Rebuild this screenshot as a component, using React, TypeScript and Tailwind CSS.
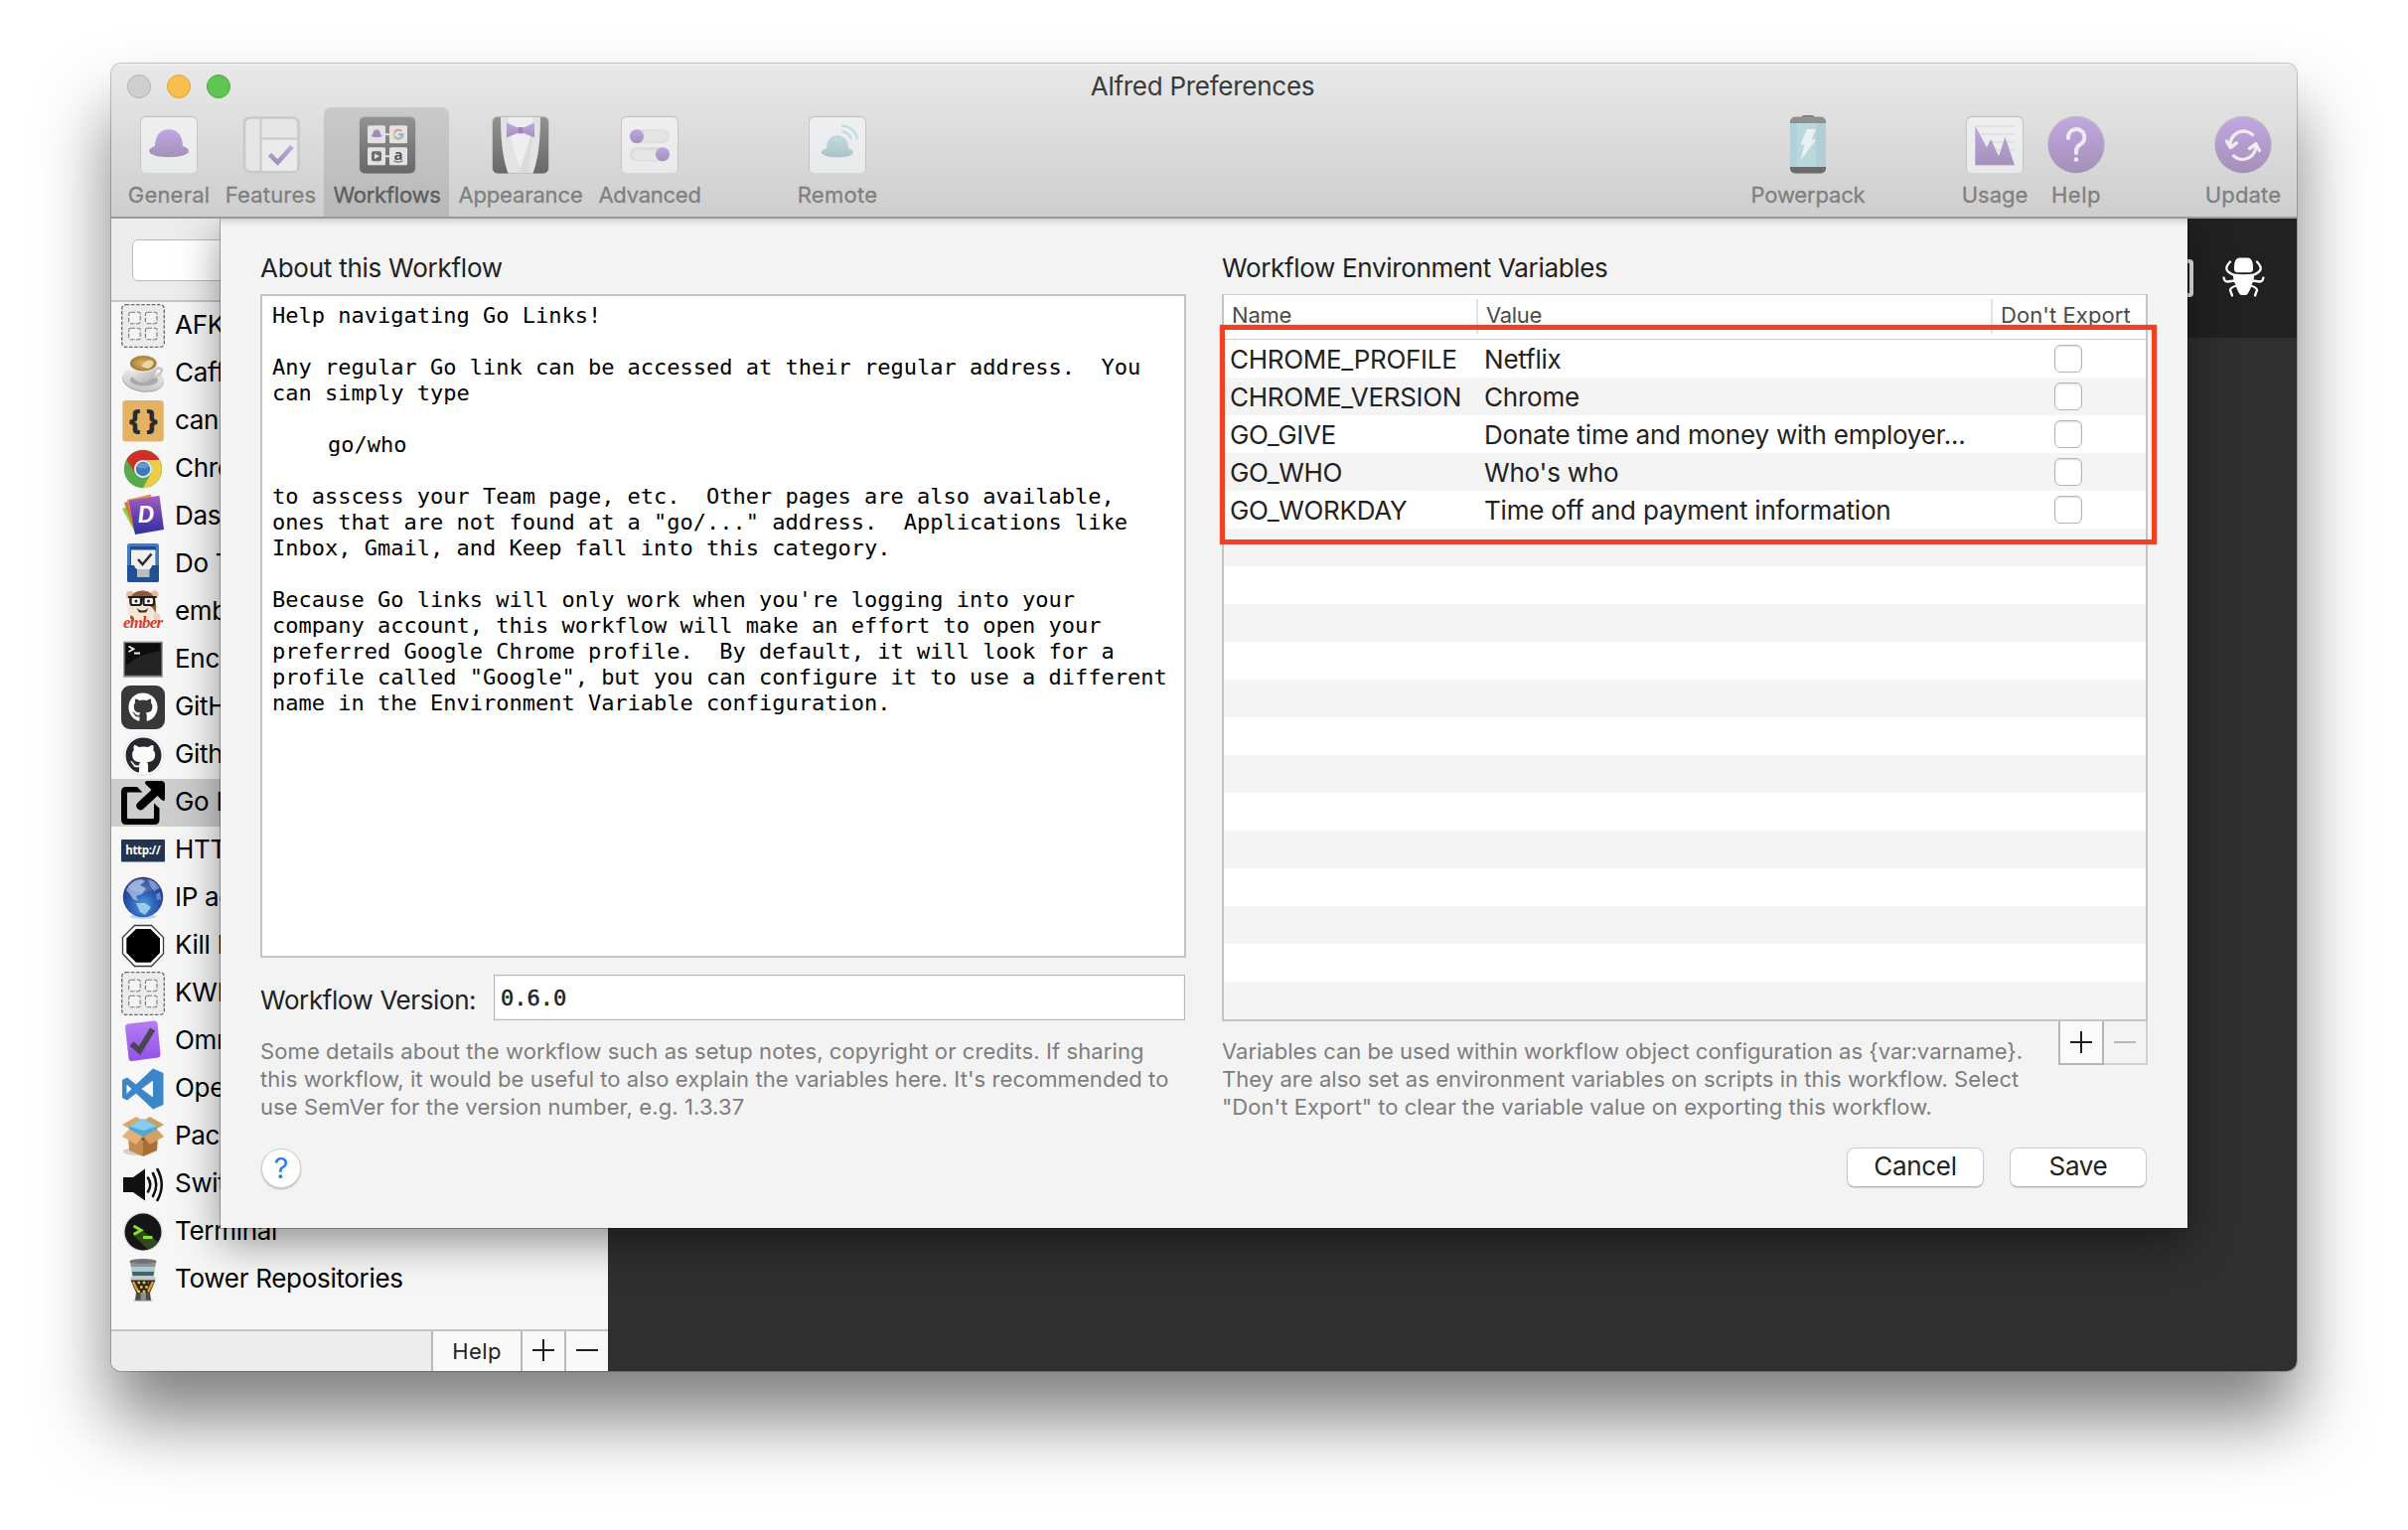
import React from 'react';
import { FaGithub } from 'react-icons/fa';

/* ---------- toolbar icons ---------- */

const Defs = () => (
  <svg width="0" height="0" className="absolute">
    <defs>
      <linearGradient id="purple" x1="0" y1="0" x2="0" y2="1">
        <stop offset="0" stopColor="#c1a6e3" />
        <stop offset="1" stopColor="#a391b7" />
      </linearGradient>
      <linearGradient id="teal" x1="0" y1="0" x2="0" y2="1">
        <stop offset="0" stopColor="#bfdbe2" />
        <stop offset="1" stopColor="#acc3c8" />
      </linearGradient>
      <linearGradient id="tile" x1="0" y1="0" x2="0" y2="1">
        <stop offset="0" stopColor="#eeeff1" />
        <stop offset="1" stopColor="#e8eaea" />
      </linearGradient>
      <linearGradient id="dark" x1="0" y1="0" x2="0" y2="1">
        <stop offset="0" stopColor="#929292" />
        <stop offset="1" stopColor="#686868" />
      </linearGradient>
    </defs>
  </svg>
);

const Box = ({ children }: { children: React.ReactNode }) => (
  <svg width="58" height="60" viewBox="-1 -2 58 60" className="block overflow-visible">
    {children}
  </svg>
);

const Tile = ({ fill = 'url(#tile)' }: { fill?: string }) => (
  <>
    <rect x="-0.8" y="-1.2" width="57.6" height="58" rx="6" fill="#b4b4b4" opacity="0.75" />
    <rect x="0" y="0" width="56" height="56.4" rx="5" fill={fill} />
  </>
);

const Hat = ({ fill }: { fill: string }) => (
  <path
    fill={fill}
    d="M14 29C14.500 18 19.500 12.300 28 12.300S41.500 18 42 29C45.500 30.200 48 32 48 34C48 37.600 39 40.200 28 40.200S8 37.600 8 34C8 32 10.500 30.200 14 29Z"
  />
);

const GeneralIcon = () => (
  <Box>
    <Tile />
    <Hat fill="url(#purple)" />
  </Box>
);

const FeaturesIcon = () => (
  <Box>
    <rect x="1" y="0.500" width="54.500" height="54.500" rx="6" fill="#e6e6e6" stroke="#c9c9c9" strokeWidth="2.600" />
    <rect x="18.500" y="22.500" width="35" height="31" rx="1" fill="#eaebeb" />
    <path d="M17.500 1V54M17.500 21.500H55" stroke="#c9c9c9" strokeWidth="2" />
    <path d="M26.500 37.500L34.500 45.500L49 29.500" fill="none" stroke="url(#purple)" strokeWidth="4.600" />
  </Box>
);

const WorkflowsIcon = () => (
  <Box>
    <Tile fill="url(#dark)" />
    <path d="M26 17.300H30M26 39.300H30" stroke="#e2e2e2" strokeWidth="2" />
    {[[8, 8.3], [30, 8.3], [8, 30.3], [30, 30.3]].map(([x, y]) => (
      <rect key={`${x}-${y}`} x={x} y={y} width="18" height="18" rx="1.500" fill="#e2e2e2" />
    ))}
    <g transform="translate(9.500 9.200) scale(0.275)">
      <Hat fill="#a08cba" />
    </g>
    <g fill="none" strokeWidth="2.200">
      <path d="M42.200 14A4.400 4.400 0 0 0 35.200 15.200" stroke="#d79a97" />
      <path d="M35.200 15.200A4.400 4.400 0 0 0 35.400 19.600" stroke="#dcc795" />
      <path d="M35.400 19.600A4.400 4.400 0 0 0 41.600 20.800" stroke="#9dbda4" />
      <path d="M41.600 20.800A4.400 4.400 0 0 0 43.300 17.400H39" stroke="#97add2" />
    </g>
    <rect x="12" y="34.300" width="10" height="10" rx="2" fill="#6c6c6c" />
    <path d="M15 36.500V42.100L20 39.300Z" fill="#e2e2e2" />
    <text x="39" y="42.600" textAnchor="middle" fontFamily="Open Sans, sans-serif" fontWeight="700" fontSize="15" fill="#555">a</text>
    <path d="M34.500 43.800Q39 46.600 43.500 43.800" stroke="#666" strokeWidth="1.200" fill="none" />
  </Box>
);

const AppearanceIcon = () => (
  <Box>
    <Tile fill="url(#dark)" />
    <path d="M8 0H48C48 22 46 42 40.500 56.400H15.500C10 42 8 22 8 0Z" fill="#e3e3e3" />
    <path d="M16 0H40C39.500 18 35 36 28 51C21 36 16.500 18 16 0Z" fill="#edeeef" />
    <path d="M28 51L40.500 12L36 56.400H26Z" fill="#d7d7d7" opacity="0.700" />
    <path d="M14 5.500L25 10.500H31L42 5.500V20.500L31 16H25L14 20.500Z" fill="url(#purple)" />
    <rect x="25.500" y="10" width="5" height="6.400" fill="#9c86bb" />
  </Box>
);

const AdvancedIcon = () => (
  <Box>
    <Tile />
    <rect x="8" y="12.300" width="40" height="14" rx="7" fill="#dfdfdf" />
    <rect x="8" y="30.300" width="40" height="14" rx="7" fill="#dcdcdc" />
    <rect x="14" y="14" width="31" height="10.500" rx="5" fill="#e4e4e4" />
    <rect x="11" y="33" width="30" height="10" rx="5" fill="#e5e5e5" />
    <circle cx="15" cy="19.300" r="7" fill="url(#purple)" />
    <circle cx="41" cy="37.300" r="7" fill="url(#purple)" />
  </Box>
);

const RemoteIcon = () => (
  <Box>
    <Tile />
    <g transform="translate(5.600 8.300) scale(0.800)">
      <Hat fill="url(#teal)" />
    </g>
    <path d="M32 14.500A10 10 0 0 1 42 22.300M32 8.600A16 16 0 0 1 48 22.300" fill="none" stroke="#bfdbe2" strokeWidth="2.200" />
  </Box>
);

const PowerpackIcon = () => (
  <Box>
    <path d="M22 1V-0.500Q22 -2 23.500 -2H32.500Q34 -2 34 -0.500V1Z" fill="#777" />
    <rect x="10" y="-0.400" width="36" height="56.800" rx="5" fill="url(#dark)" />
    <rect x="10" y="6" width="36" height="44" fill="#b8d8de" />
    <rect x="10" y="6" width="7" height="44" fill="#aacdd4" opacity="0.600" />
    <rect x="36" y="6" width="10" height="44" fill="#a8c4ca" opacity="0.500" />
    <path d="M27 12H36L31.500 22.500H36L20.500 43.500L24.500 27.500H20.500Z" fill="#eaf1f2" />
  </Box>
);

const UsageIcon = () => (
  <Box>
    <Tile />
    <path d="M9 9H48M14 17H48M22 25H48M30 33H48" stroke="#dcdcde" strokeWidth="1.600" />
    <path d="M8.300 8.500L20 30.500L24 22L32 39L38.500 20L48 48.200H8.300Z" fill="url(#purple)" />
  </Box>
);

const Disc = () => (
  <>
    <circle cx="28" cy="27.500" r="28.800" fill="#a9a3b0" opacity="0.600" />
    <circle cx="28" cy="28.200" r="28" fill="url(#purple)" />
  </>
);

const HelpIcon = () => (
  <Box>
    <Disc />
    <path d="M20 21A8.200 8.200 0 1 1 32 27.500C29 29.300 28 31 28 33.500V36" fill="none" stroke="#edebf0" strokeWidth="4" strokeLinecap="round" />
    <circle cx="28" cy="42.500" r="2.300" fill="#edebf0" />
  </Box>
);

const UpdateIcon = () => (
  <Box>
    <Disc />
    <g fill="none" stroke="#edebf0" strokeWidth="3.400" strokeLinecap="round" strokeLinejoin="round">
      <path d="M37.500 17.500A13.500 13.500 0 0 0 15.200 30" />
      <path d="M18.500 39A13.500 13.500 0 0 0 40.800 27" />
      <path d="M11.500 24L15.200 30.500L21.500 26" />
      <path d="M44.500 33.500L40.800 27L34.500 31.500" />
    </g>
  </Box>
);

const ToolItem = ({ label, width, icon, selected, tracking = 'tracking-normal' }: {
  label: string; width: string; icon: React.ReactNode; selected?: boolean; tracking?: string;
}) => (
  <div className={`flex h-[110px] shrink-0 flex-col items-center rounded-t-[7px] pt-2 ${width} ${selected ? 'bg-black/10 pl-px text-[#5d5d5d]' : 'text-[#808080]'}`}>
    {icon}
    <span className={`mt-[6px] text-[22px] leading-7 whitespace-nowrap ${tracking} ${selected ? '[-webkit-text-stroke:0.4px_currentColor]' : '[-webkit-text-stroke:0.3px_currentColor]'}`}>{label}</span>
  </div>
);

/* ---------- sidebar icons ---------- */

const S = ({ children }: { children: React.ReactNode }) => (
  <svg width="44" height="44" viewBox="0 0 44 44" className="block shrink-0 overflow-visible">{children}</svg>
);

const Placeholder = () => (
  <S>
    <rect x="0.700" y="0.700" width="42.600" height="42.600" rx="4" fill="#ececec" stroke="#6a6a6a" strokeWidth="1.300" strokeDasharray="3.600 1.600" />
    {[[7.7, 8.200], [24.500, 8.200], [7.7, 24.300], [24.500, 24.300]].map(([x, y]) => (
      <rect key={`${x}-${y}`} x={x} y={y} width="11.500" height="11.500" rx="2" fill="#f4f4f4" stroke="#777" strokeWidth="1.100" strokeDasharray="4.500 1.600" />
    ))}
  </S>
);

const Coffee = () => (
  <S>
    <defs>
      <radialGradient id="cf" cx="0.500" cy="0.500" r="0.600"><stop offset="0" stopColor="#d8b46c" /><stop offset="0.700" stopColor="#b0853a" /><stop offset="1" stopColor="#80601f" /></radialGradient>
      <linearGradient id="cup" x1="0" y1="0" x2="1" y2="1"><stop offset="0" stopColor="#fff" /><stop offset="1" stopColor="#a9a9a9" /></linearGradient>
      <linearGradient id="sc" x1="0" y1="0" x2="0" y2="1"><stop offset="0" stopColor="#efefef" /><stop offset="1" stopColor="#c6c6c6" /></linearGradient>
    </defs>
    <ellipse cx="22" cy="28.500" rx="21" ry="12" fill="#9e9e9e" transform="rotate(8 22 28)" />
    <ellipse cx="22" cy="27.500" rx="21" ry="12" fill="url(#sc)" transform="rotate(8 22 28)" />
    <ellipse cx="23" cy="28.500" rx="14" ry="6" fill="#aaa" />
    <path d="M34 17Q42 15 40.500 20Q38.500 25 30 26" fill="none" stroke="#c9c9c9" strokeWidth="2.600" />
    <path d="M7.500 12C8 22 13 31 21.500 31S36 23 37 12Z" fill="url(#cup)" />
    <ellipse cx="22.300" cy="11.500" rx="14.800" ry="9" fill="#f1f1f1" />
    <ellipse cx="22.300" cy="11.700" rx="13.300" ry="7.800" fill="url(#cf)" />
    <path d="M20 15Q26 6 32 9.500Q34 14 27 17Z" fill="#f2e3c3" opacity="0.800" />
  </S>
);

const Braces = () => (
  <S>
    <rect x="1.300" y="1" width="41.500" height="41.500" rx="3.500" fill="#e4b263" />
    <text x="13.500" y="29.500" textAnchor="middle" fontFamily="Open Sans, sans-serif" fontWeight="800" fontSize="28" fill="#2b2b2b">{'{'}</text>
    <text x="31" y="29.500" textAnchor="middle" fontFamily="Open Sans, sans-serif" fontWeight="800" fontSize="28" fill="#2b2b2b">{'}'}</text>
  </S>
);

const Chrome = () => (
  <S>
    <circle cx="22" cy="22" r="19.200" fill="#58aa4b" />
    <path d="M5.400 12.400A19.200 19.200 0 0 1 38.600 13H22A9 9 0 0 0 14.200 26.500Z" fill="#ce2f27" />
    <path d="M38.600 13A19.200 19.200 0 0 1 22 41.200L29.800 26.500A9 9 0 0 0 22 13Z" fill="#f0cb45" />
    <circle cx="22" cy="22" r="9" fill="#e9eef3" />
    <circle cx="22" cy="22" r="7.200" fill="#3d78b8" />
    <path d="M15.500 20A7 7 0 0 1 28.500 20Q22 23 15.500 20Z" fill="#6598cc" />
  </S>
);

const Dash = () => (
  <S>
    <defs><linearGradient id="ds" x1="0" y1="0" x2="0" y2="1"><stop offset="0" stopColor="#a35fc0" /><stop offset="0.500" stopColor="#6741b0" /><stop offset="1" stopColor="#2d31a0" /></linearGradient></defs>
    <path d="M1 14L6 12L16 34L14 38Z" fill="#8fcb4c" />
    <path d="M3 8L28 0L36 30L14 38Z" fill="#d8752f" />
    <path d="M6 5L30 -0.500L34 20L14 36Z" fill="#e99546" />
    <path d="M7.500 5.500L38.500 1L43 35L14 40Z" fill="url(#ds)" />
    <text x="25" y="28" textAnchor="middle" fontFamily="Lato, sans-serif" fontWeight="900" fontSize="23" fontStyle="italic" fill="#fff">D</text>
  </S>
);

const DoThings = () => (
  <S>
    <rect x="6" y="1" width="32" height="39" rx="2.500" fill="#3f7cc8" />
    <rect x="9" y="4" width="26" height="22" fill="#1d4d8f" />
    <rect x="10" y="7.500" width="24.500" height="21" fill="#f1f1f1" />
    <path d="M6 23H13Q14.500 27 16.500 27H28Q30 27 31 23H38V37.500Q38 40 35.500 40H8.500Q6 40 6 37.500Z" fill="#1f4f96" />
    <path d="M16 27H28.500V35H16Z" fill="#b9bdc2" />
    <path d="M17 17L21.500 22L30.500 11.500" fill="none" stroke="#2c2c2c" strokeWidth="2.600" />
  </S>
);

const Ember = () => (
  <S>
    <circle cx="9" cy="5" r="4" fill="#e8b8a4" />
    <circle cx="33.500" cy="4.500" r="4" fill="#e8b8a4" />
    <path d="M8 12Q11 1 22 0.500T34 12Q36 16 35 22L30 30H11Q5 24 6 18Z" fill="#f3e6d6" />
    <path d="M8 11Q10 1 21 0.500T34.500 11Q36 17 34.500 24Q32 15 27 16L21.500 11L16 15.500Q12 17 8 11Z" fill="#8f5a33" />
    <rect x="9.500" y="7" width="10.500" height="8" rx="2" fill="#f6f6f6" stroke="#1c1c1c" strokeWidth="2.200" />
    <rect x="22.500" y="7" width="10.500" height="8" rx="2" fill="#f6f6f6" stroke="#1c1c1c" strokeWidth="2.200" />
    <path d="M7 7H35.500" stroke="#1c1c1c" strokeWidth="2" />
    <circle cx="15" cy="11" r="1.500" fill="#222" />
    <circle cx="27.500" cy="11" r="1.500" fill="#222" />
    <path d="M15.500 18Q21.500 23 27.500 18L25 22.500H18Z" fill="#4a2a1a" />
    <path d="M11 26Q9 29 13 29" stroke="#8f5a33" strokeWidth="3" fill="none" />
    <circle cx="36" cy="27" r="3.600" fill="#eecfc0" />
    <text x="22" y="38" textAnchor="middle" fontFamily="Liberation Serif, serif" fontWeight="700" fontStyle="italic" fontSize="17" textLength="40" fill="#d5402b">ember</text>
  </S>
);

const Prompt = () => (
  <S>
    <rect x="2" y="3.500" width="40" height="36.500" fill="#a7a7a7" />
    <rect x="3.300" y="4.800" width="37.400" height="33.500" fill="#3a3a3a" />
    <rect x="4.500" y="5.500" width="35" height="31.500" fill="#0c0c0c" />
    <path d="M4.500 28Q20 15 39.500 13V37H4.500Z" fill="#232323" />
    <path d="M7.500 8.500L12.500 11.200L7.500 14M13 15.500H19" fill="none" stroke="#eee" strokeWidth="1.800" />
  </S>
);

const GithubSquare = () => (
  <div className="flex size-11 shrink-0 items-center justify-center rounded-[9px] bg-[#383838]">
    <FaGithub className="size-[30px] text-white" />
  </div>
);

const GithubRound = () => (
  <div className="flex size-11 shrink-0 items-center justify-center">
    <div className="flex size-[39px] items-center justify-center rounded-full bg-[#fbfbfb] shadow-[0_0_1px_1px_rgba(0,0,0,0.08)]">
      <FaGithub className="size-[37px] text-[#25292e]" />
    </div>
  </div>
);

const GoLinks = () => (
  <S>
    <path d="M5 6H16L21.500 11.500H7Q6 11.500 6 12.500V37Q6 38 7 38H32Q33 38 33 37V22.500L38.500 27.500V39Q38.500 44 33.500 44H5Q0 44 0 39V11Q0 6 5 6Z" />
    <path d="M26 0H40Q44 0 44 4V18Q44 21.500 41 19.200L36.500 15L22 28.500Q19 30.500 16.500 28T16 22.500L30.500 9L25 3.800Q22.500 0.500 26 0Z" />
  </S>
);

const Http = () => (
  <S>
    <rect x="0" y="11" width="44" height="22.500" rx="1" fill="#22344f" />
    <text x="22" y="25.800" textAnchor="middle" fontFamily="Open Sans, sans-serif" fontWeight="700" fontSize="11.500" textLength="35.500" fill="#fff">http://</text>
  </S>
);

const Globe = () => (
  <S>
    <defs><radialGradient id="gl" cx="0.500" cy="0.700" r="0.700"><stop offset="0" stopColor="#4f9be0" /><stop offset="0.500" stopColor="#2a5bb0" /><stop offset="1" stopColor="#23307f" /></radialGradient></defs>
    <ellipse cx="22" cy="40.500" rx="13" ry="2.500" fill="#9fc4ea" opacity="0.700" />
    <circle cx="22" cy="21" r="20.200" fill="url(#gl)" />
    <path d="M5 14Q10 4 20 3L24 5L19 9L25 12L21 18L15 20L17 25L12 23L8 17Z" fill="#b9cfee" opacity="0.700" />
    <path d="M27 3Q34 4 39 12L33 15L29 9Z" fill="#9db9e2" opacity="0.600" />
    <path d="M15 27L24 27L30 31L24 39L19 36Z" fill="#a9d6ee" opacity="0.850" />
    <path d="M35 18L39 16L40 23L36 24Z" fill="#7fa3d8" opacity="0.700" />
    <ellipse cx="21" cy="9" rx="14" ry="7" fill="#fff" opacity="0.150" />
  </S>
);

const Octagon = () => (
  <S>
    <path d="M13.500 1.500H30.500L42.500 13.500V30L30.500 42.500H13.500L1.500 30V13.500Z" fill="#fff" stroke="#3a3a3a" strokeWidth="1.300" />
    <path d="M15 5H29.500L39 14.500V29L29.500 38.800H15L5.300 29V14.500Z" />
  </S>
);

const Omni = () => (
  <S>
    <defs><linearGradient id="om" x1="0" y1="0" x2="0" y2="1"><stop offset="0" stopColor="#b37ff0" /><stop offset="1" stopColor="#9350ea" /></linearGradient></defs>
    <path d="M7 4.500L33 1.500Q36 1.200 36.500 4L39.500 35Q39.500 38 37 38.500L11 42Q8 42.300 7.600 39.500L4 8Q4 5 7 4.500Z" fill="url(#om)" />
    <path d="M10.500 24.500L18.500 31.500L31.500 10" fill="none" stroke="#494650" strokeWidth="5.800" />
  </S>
);

const VsCode = () => (
  <S>
    <path fillRule="evenodd" fill="#3a86c9" d="M32 1.500L42.500 6V38L32 42.500L15 26.500L6 33.500L1 31V13L6 10.500L15 17.500ZM32 13.500L20.500 22L32 30.500ZM5.500 17.500V27L10.500 22Z" />
  </S>
);

const Package = () => (
  <S>
    <ellipse cx="16" cy="37" rx="14" ry="4" fill="#999" opacity="0.400" />
    <path d="M7 22L22 22V42L8 36Z" fill="#c58b4e" />
    <path d="M37 22L22 22V42L36 36Z" fill="#a86f35" />
    <path d="M8 12L22 6L36 12V20L22 26L8 20Z" fill="#8a5a28" />
    <path d="M1 10L15 2L22 6L8 14Z" fill="#d9a868" />
    <path d="M43 10L29 2L22 6L36 14Z" fill="#cf9d5c" />
    <path d="M8 11.500L22 4L36 11.500V15L22 22L8 15Z" fill="#4fa8d8" />
    <path d="M8 11.500L22 4L36 11.500L22 16Z" fill="#86ccee" />
    <path d="M1 22L8 14.500L22 22L15 30Z" fill="#e0b277" />
    <path d="M43 22L36 14.500L22 22L29 30Z" fill="#d3a162" />
  </S>
);

const Speaker = () => (
  <S>
    <path d="M2 15H12L24 6.500V38.500L12 30H2Z" fill="#111" />
    <path d="M27 15.500Q31.500 22.500 27 29.500M32 11Q38.500 22.500 32 34M36.500 7Q45 22.500 36.500 38" fill="none" stroke="#111" strokeWidth="2.600" strokeLinecap="round" />
  </S>
);

const Term = () => (
  <S>
    <circle cx="22" cy="22" r="19.600" fill="#d4d4d4" />
    <circle cx="22" cy="22" r="18.400" fill="#161616" />
    <path d="M20 20L31 27.500L37 32A18.400 18.400 0 0 1 27 39.700L13 26Z" fill="#2f4a1c" />
    <path d="M12.500 16L20 20.200L12.500 24.400M22 27.500H31.500" fill="none" stroke="#8ae234" strokeWidth="2.900" />
  </S>
);

const Tower = () => (
  <S>
    <path d="M8.500 3.500H35.500L34 9.500H10Z" fill="#8d9093" />
    <ellipse cx="22" cy="3.500" rx="13.500" ry="2.500" fill="#6f7275" />
    <path d="M10 9.500H34L33 19H11Z" fill="#a8cbd3" />
    <path d="M11 14H33L32.500 18H11.500Z" fill="#43626b" />
    <path d="M9 20.500L11 18.500H33L35 20.500L33 23H11Z" fill="#c6cace" />
    <path d="M9.500 22.500H34.500L29 35H15Z" fill="#2b2620" />
    <path d="M12 24L17 34M32 24L27 34" stroke="#e0952a" strokeWidth="2.600" />
    <path d="M16.500 25H27.500M19 29.500H28M16.500 34H27.500" stroke="#f0c34a" strokeWidth="2.600" strokeDasharray="2.600 2.600" />
    <path d="M15 35H29L30 43H14Z" fill="#4a4a4a" />
    <path d="M19.500 35H25V43H19.500Z" fill="#8d8d8d" />
    <ellipse cx="22" cy="43" rx="10" ry="1" fill="#888" opacity="0.600" />
  </S>
);

const WORKFLOWS: { name: string; icon: React.ReactNode; selected?: boolean }[] = [
  { name: 'AFK', icon: <Placeholder /> },
  { name: 'Caffe', icon: <Coffee /> },
  { name: 'caniuse', icon: <Braces /> },
  { name: 'Chrome', icon: <Chrome /> },
  { name: 'Dash', icon: <Dash /> },
  { name: 'Do To', icon: <DoThings /> },
  { name: 'ember', icon: <Ember /> },
  { name: 'Encode', icon: <Prompt /> },
  { name: 'GitHub', icon: <GithubSquare /> },
  { name: 'Github', icon: <GithubRound /> },
  { name: 'Go Links', icon: <GoLinks />, selected: true },
  { name: 'HTTP', icon: <Http /> },
  { name: 'IP addr', icon: <Globe /> },
  { name: 'Kill Pr', icon: <Octagon /> },
  { name: 'KWM', icon: <Placeholder /> },
  { name: 'Omni', icon: <Omni /> },
  { name: 'Open', icon: <VsCode /> },
  { name: 'Pack', icon: <Package /> },
  { name: 'Switch', icon: <Speaker /> },
  { name: 'Terminal', icon: <Term /> },
  { name: 'Tower Repositories', icon: <Tower /> },
];

const VARIABLES = [
  ['CHROME_PROFILE', 'Netflix'],
  ['CHROME_VERSION', 'Chrome'],
  ['GO_GIVE', 'Donate time and money with employer...'],
  ['GO_WHO', "Who's who"],
  ['GO_WORKDAY', 'Time off and payment information'],
];

const ABOUT = `Help navigating Go Links!

Any regular Go link can be accessed at their regular address.  You
can simply type

\tgo/who

to asscess your Team page, etc.  Other pages are also available,
ones that are not found at a "go/..." address.  Applications like
Inbox, Gmail, and Keep fall into this category.

Because Go links will only work when you're logging into your
company account, this workflow will make an effort to open your
preferred Google Chrome profile.  By default, it will look for a
profile called "Google", but you can configure it to use a different
name in the Environment Variable configuration.`;

const Plus = ({ color = 'bg-[#1f1f1f]' }: { color?: string }) => (
  <span className="grid place-items-center">
    <span className={`col-start-1 row-start-1 h-[2px] w-[22px] ${color}`} />
    <span className={`col-start-1 row-start-1 h-[22px] w-[2px] ${color}`} />
  </span>
);
const Minus = ({ color = 'bg-[#1f1f1f]' }: { color?: string }) => <span className={`h-[2px] w-[22px] ${color}`} />;

const Titlebar = () => (
  <header className="flex h-[156px] shrink-0 flex-col border-t-2 border-b-2 border-t-[#f1f1f1] border-b-[#999] bg-linear-to-b from-[#e8e8e8] to-[#cecece]">
    <div className="grid h-[42px] shrink-0 grid-cols-3 items-center">
      <div className="flex gap-4 pl-4">
        <span className="size-6 rounded-full border border-[#b3b3b3] bg-[#cfcfcf]" />
        <span className="size-6 rounded-full border border-[#dfa03c] bg-[#f8bf4e]" />
        <span className="size-6 rounded-full border border-[#44ab3a] bg-[#61c554]" />
      </div>
      <h1 className="pr-[3px] text-center text-[26px] leading-8 tracking-[-0.27px] text-[#3a3a3a]">Alfred Preferences</h1>
    </div>
    <nav className="flex pl-2">
      <ToolItem label="General" width="w-[100px]" icon={<GeneralIcon />} tracking="tracking-[0.2px]" />
      <ToolItem label="Features" width="w-[105px]" icon={<FeaturesIcon />} tracking="tracking-[0.2px]" />
      <div className="ml-px flex">
        <ToolItem label="Workflows" width="w-[126px]" icon={<WorkflowsIcon />} tracking="tracking-[-0.25px]" selected />
      </div>
      <ToolItem label="Appearance" width="w-[144px]" icon={<AppearanceIcon />} tracking="tracking-[-0.14px]" />
      <ToolItem label="Advanced" width="w-[116px]" icon={<AdvancedIcon />} tracking="tracking-[-0.25px]" />
      <div className="ml-[73px] flex">
        <ToolItem label="Remote" width="w-[116px]" icon={<RemoteIcon />} tracking="tracking-[0.25px]" />
      </div>
      <div className="ml-auto flex">
        <ToolItem label="Powerpack" width="w-[140px]" icon={<PowerpackIcon />} tracking="tracking-[-0.17px]" />
      </div>
      <div className="ml-[78px] flex gap-0.5">
        <ToolItem label="Usage" width="w-[80px]" icon={<UsageIcon />} />
        <ToolItem label="Help" width="w-[80px]" icon={<HelpIcon />} tracking="tracking-[0.5px]" />
      </div>
      <div className="ml-[74px] flex">
        <ToolItem label="Update" width="w-[108px]" icon={<UpdateIcon />} tracking="tracking-[0.17px]" />
      </div>
    </nav>
  </header>
);

const Sidebar = () => (
  <aside className="flex w-[500px] shrink-0 flex-col bg-[#f6f6f6]">
    <div className="h-[84px] shrink-0 border-b-2 border-[#c4c4c4] bg-[#ececec] px-[21px] pt-[21px]">
      <div className="h-[42px] rounded-[6px] border border-[#b9b9b9] bg-white" />
    </div>
    <ul className="flex-1">
      {WORKFLOWS.map((w, i) => (
        <li key={i} className={`flex h-12 items-center gap-[10px] pl-[10px] ${w.selected ? 'bg-[#cdcdcd]' : ''}`}>
          {w.icon}
          <span className="pb-[3px] text-[26px] leading-8 tracking-[-0.3px] whitespace-nowrap text-black">{w.name}</span>
        </li>
      ))}
    </ul>
    <div className="flex h-[42px] shrink-0 justify-end border-t-2 border-[#c4c4c4] bg-[#ececec]">
      <div className="flex w-[90px] items-center justify-center border-l-2 border-[#b9b9b9] bg-[#f9f9f9] text-[22px] leading-7 tracking-[0.4px] text-[#222]">Help</div>
      <div className="flex w-11 items-center justify-center border-l-2 border-[#b9b9b9] bg-[#f9f9f9] pb-[2px]"><Plus /></div>
      <div className="flex w-11 items-center justify-center border-l-2 border-[#b9b9b9] bg-[#f9f9f9] pb-[2px]"><Minus /></div>
    </div>
  </aside>
);

const Canvas = () => (
  <main className="flex flex-1 flex-col bg-[#2f2f2f]">
    <div className="flex h-[120px] items-start justify-end gap-[29px] bg-[#212121] pr-[32px] pt-[39px]">
      <div className="mt-[2px] h-[38px] w-[40px] rounded-[4px] border-4 border-[#ececec]" />
      <svg width="43" height="40" viewBox="0 0 43 40">
        <path d="M12 10Q12 0.500 17.500 0.500H25.500Q31 0.500 31 10V12Q31 14.800 28 15.200H15Q12 14.800 12 12Z" fill="#fff" />
        <path d="M11 16.500Q21.500 18 32 16.500V20Q31 26 29.500 27.500Q27.500 36 24 38H19Q15.500 36 13.500 27.500Q12 26 11 20Z" fill="#fff" />
        <g fill="none" stroke="#fff" strokeWidth="2.300" strokeLinecap="round" strokeLinejoin="round">
          <path d="M8 4.500Q3.500 9 4.500 12.500Q6 15.500 12 18M35 4.500Q39.500 9 38.500 12.500Q37 15.500 31 18" />
          <path d="M1.500 20.500Q2.500 24.500 5 24.500L13 23.500M41.500 20.500Q40.500 24.500 38 24.500L30 23.500" />
          <path d="M14.500 28.500Q8 30.500 8 33L10 38.500M28.500 28.500Q35 30.500 35 33L33 38.500" />
        </g>
      </svg>
    </div>
  </main>
);

const AboutPane = () => (
  <section className="flex w-[932px] flex-col">
    <h2 className="text-[26px] leading-8 tracking-[-0.25px] text-[#222]">About this Workflow</h2>
    <div className="mt-[10px] h-[668px] border-2 border-[#c4c4c4] bg-white px-[10px] pt-[7px]">
      <pre className="font-['DejaVu_Sans_Mono',monospace] text-[22px] leading-[26px] text-black [tab-size:56px]">{ABOUT}</pre>
    </div>
    <div className="mt-[17px] mr-px flex h-[46px]">
      <div className="w-[235px] pt-[10px] text-[26px] leading-8 tracking-[-0.4px] whitespace-nowrap text-[#222]">Workflow Version:</div>
      <div className="flex-1 border border-[#b6b6b6] bg-white pt-[10px] pl-[6px] font-['DejaVu_Sans_Mono',monospace] text-[22px] leading-[26px] text-[#1f1f1f] shadow-[inset_0_0_0_1px_#f0f0f0] [-webkit-text-stroke:0.5px_currentColor]">0.6.0</div>
    </div>
    <p className="mt-[17px] text-[22px] leading-7 tracking-[0.1px] whitespace-nowrap text-[#7d7d7d]">
      Some details about the workflow such as setup notes, copyright or credits. If sharing<br />
      <span className="tracking-[0.065px]">this workflow, it would be useful to also explain the variables here. It's recommended to</span><br />
      use SemVer for the version number, e.g. 1.3.37
    </p>
    <button className="mt-[28px] ml-px flex size-10 items-center justify-center rounded-full border border-[#cfcfcf] bg-white text-[29px] leading-8 text-[#2a7cf6] shadow-[0_1px_2px_rgba(0,0,0,0.25)]">?</button>
  </section>
);

const VariablesPane = () => (
  <section className="flex w-[932px] flex-col">
    <h2 className="text-[26px] leading-8 tracking-[-0.33px] text-[#222]">Workflow Environment Variables</h2>
    <div className="relative mt-[10px] flex h-[732px] flex-col border-x-2 border-t border-b-2 border-[#c4c4c4] border-t-[#d2d2d2] bg-white">
      <div className="flex h-[45px] items-center border-b border-[#cfcfcf] pb-[1px] text-[22px] leading-[33px] text-[#4a4a4a]">
        <div className="h-[35px] w-[254px] pl-[8px] tracking-[-0.2px]">Name</div>
        <div className="h-[35px] w-[518px] border-l-2 border-[#e2e2e2] pl-[8px] tracking-[-0.3px]">Value</div>
        <div className="h-[35px] border-l-2 border-[#e2e2e2] pl-[8px] tracking-[0.08px]">Don't Export</div>
      </div>
      {Array.from({ length: 18 }, (_, i) => (
        <div key={i} className={`flex h-[38px] shrink-0 text-[26px] leading-[38px] text-[#222] ${i % 2 ? 'bg-[#f4f4f4]' : 'bg-white'}`}>
          {VARIABLES[i] && (
            <>
              <div className="w-[262px] pt-px pl-[6px] tracking-[-0.3px]">{VARIABLES[i][0]}</div>
              <div className="w-[574px] pt-px tracking-[-0.21px]">{VARIABLES[i][1]}</div>
              <div className="mt-[5px] size-7 rounded-[6px] border border-[#b3b3b3] bg-white shadow-[inset_0_1px_2px_rgba(0,0,0,0.14)]" />
            </>
          )}
        </div>
      ))}
      <div className="absolute top-[30px] -left-[4px] h-[221px] w-[943px] border-[5px] border-[#f04124] shadow-[0_0_1px_#f04124]" />
    </div>
    <div className="flex">
      <p className="pt-[16px] text-[22px] leading-7 tracking-[0.05px] whitespace-nowrap text-[#7d7d7d]">
        <span className="tracking-[0px]">Variables can be used within workflow object configuration as {'{var:varname}'}.</span><br />
        They are also set as environment variables on scripts in this workflow. Select<br />
        "Don't Export" to clear the variable value on exporting this workflow.
      </p>
      <div className="ml-auto flex h-11">
        <div className="flex w-[46px] items-center justify-center border-2 border-t-0 border-[#b4b4b4] bg-[#fafafa]"><Plus /></div>
        <div className="flex w-11 items-center justify-center border-r-2 border-b-2 border-[#d2d2d2]"><Minus color="bg-[#b8b8b8]" /></div>
      </div>
    </div>
    <div className="mt-[27px] flex justify-end gap-[26px] pr-px text-[26px] leading-8 tracking-[-0.3px] text-[#222]">
      {['Cancel', 'Save'].map((b) => (
        <button key={b} className="h-10 w-[138px] rounded-[8px] border border-[#cccccc] border-b-[#b5b5b5] bg-white pb-[2px] shadow-[0_1px_1px_rgba(0,0,0,0.12)]">{b}</button>
      ))}
    </div>
  </section>
);

export default function App() {
  return (
    <div className="h-[1540px] w-[2424px] overflow-hidden bg-white px-28 pt-16 font-[Inter,sans-serif]">
      <Defs />
      <div className="flex h-[1316px] w-[2200px] flex-col overflow-hidden rounded-[10px] shadow-[0_0_0_1px_rgba(0,0,0,0.22),0_48px_72px_rgba(0,0,0,0.5)]">
        <Titlebar />
        <div className="relative flex flex-1 overflow-hidden">
          <Sidebar />
          <Canvas />
          <div className="absolute top-0 left-[110px] flex h-[1016px] w-[1980px] justify-between bg-[#f3f3f3] px-10 pt-[34px] shadow-[0_0_0_1px_rgba(0,0,0,0.28),0_14px_40px_rgba(0,0,0,0.42)]">
            <div className="absolute inset-x-0 top-0 h-2 bg-linear-to-b from-[#d4d4d4] to-[#f3f3f3]" />
            <AboutPane />
            <VariablesPane />
          </div>
        </div>
      </div>
    </div>
  );
}
